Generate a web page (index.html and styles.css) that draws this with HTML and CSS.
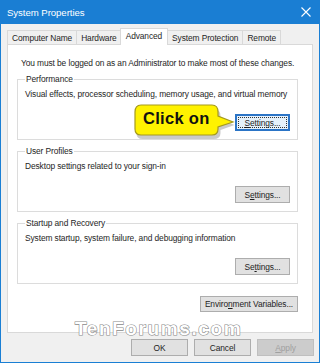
FILE: index.html
```html
<!DOCTYPE html>
<html>
<head>
<meta charset="utf-8">
<link rel="stylesheet" href="styles.css">
</head>
<body>
<div class="window">
  <div class="titlebar">
    <span class="title">System Properties</span>
    <svg class="close" width="10" height="10" viewBox="0 0 10 10"><path d="M0.5 0.5L9.5 9.5M9.5 0.5L0.5 9.5" stroke="#fff" stroke-width="1.1"/></svg>
  </div>
  <div class="tabs">
    <div class="tab">Computer Name</div>
    <div class="tab">Hardware</div>
    <div class="tab active">Advanced</div>
    <div class="tab">System Protection</div>
    <div class="tab">Remote</div>
  </div>
  <div class="panel">
    <p class="intro">You must be logged on as an Administrator to make most of these changes.</p>
    <fieldset class="group">
      <legend>Performance</legend>
      <p class="desc">Visual effects, processor scheduling, memory usage, and virtual memory</p>
      <div class="row"><button class="btn focused"><span class="focusring"><u>S</u>ettings...</span></button></div>
    </fieldset>
    <fieldset class="group">
      <legend>User Profiles</legend>
      <p class="desc">Desktop settings related to your sign-in</p>
      <div class="row"><button class="btn">S<u>e</u>ttings...</button></div>
    </fieldset>
    <fieldset class="group">
      <legend>Startup and Recovery</legend>
      <p class="desc">System startup, system failure, and debugging information</p>
      <div class="row"><button class="btn">Se<u>t</u>tings...</button></div>
    </fieldset>
    <div class="envrow"><button class="btn env">Enviro<u>n</u>ment Variables...</button></div>
  </div>
  <div class="footer">
    <button class="btn foot">OK</button>
    <button class="btn foot">Cancel</button>
    <button class="btn foot disabled"><u>A</u>pply</button>
  </div>
  <div class="callout">
    <svg class="bubble" width="102" height="36" viewBox="0 0 102 36">
      <path d="M7 3 H78 Q85 3 85 10 V13 L99 19 L85 24 V27 Q85 33 78 33 H7 Q1 33 1 27 V10 Q1 3 7 3 Z" fill="#8a8a8a" opacity="0.45" transform="translate(1.5,2)"/>
      <path d="M7 1 H78 Q84 1 84 8 V12 L99 18 L84 23 V25 Q84 31 78 31 H7 Q1 31 1 25 V8 Q1 1 7 1 Z" fill="#fff200" stroke="#a59a1e" stroke-width="1.2"/>
    </svg>
    <span class="callout-text">Click on</span>
  </div>
  <div class="watermark">TenForums.com</div>
</div>
</body>
</html>
```
FILE: styles.css
```css
* { box-sizing: border-box; }
html, body { margin: 0; padding: 0; }
body { width: 320px; height: 363px; overflow: hidden; background: #fff; font-family: "Liberation Sans", Arial, sans-serif; }
.window {
  position: relative;
  width: 320px; height: 363px;
  background: #f0f0f0;
  border: 1px solid #1a7fd4;
  border-top: none;
  display: flex; flex-direction: column;
}
.titlebar {
  height: 24px;
  margin: 0 -1px;
  background: #1a7ed3;
  display: flex; align-items: center; justify-content: space-between;
  padding: 0 9px 0 7px;
}
.title { color: #fff; font-family: "Liberation Sans", Arial, sans-serif; font-size: 9.6px; letter-spacing: -0.05px; }
.close { display: block; }
.tabs {
  display: flex;
  padding: 4px 0 0 6px;
  height: 20px;
  align-items: flex-end;
}
.tab {
  height: 14px;
  padding: 0 4px;
  border: 1px solid #d9d9d9;
  border-bottom: none;
  margin-right: -1px;
  background: #f0f0f0;
  font-size: 8.4px;
  letter-spacing: -0.1px;
  color: #1e1e1e;
  display: flex; align-items: center;
  position: relative;
  white-space: nowrap;
}
.tab.active {
  height: 17px;
  background: #fff;
  z-index: 2;
  margin-bottom: -1px;
  padding-bottom: 2px;
  margin-left: -1px;
  margin-right: -1px;
  padding-left: 5px;
  padding-right: 5px;
}
.panel {
  margin: 0 6px;
  height: 289px;
  background: #fff;
  border: 1px solid #d9d9d9;
  padding: 13px 14px 0 9px;
  display: flex; flex-direction: column;
}
.intro {
  margin: 0 0 5px 4px;
  font-size: 8.4px; color: #1e1e1e;
  letter-spacing: -0.1px;
  line-height: 11px;
  white-space: nowrap;
}
.group {
  margin: 0 0 6.5px 0;
  border: 1px solid #dcdcdc;
  height: 65.5px;
  padding: 0 7px 0 7px;
  min-width: 0;
}
.group legend {
  font-size: 8.4px; color: #1e1e1e;
  letter-spacing: -0.1px;
  padding: 0 1px;
  margin-left: 0;
  line-height: 11px;
}
.desc {
  margin: 4px 0 0 0;
  font-size: 8.4px; color: #1e1e1e;
  letter-spacing: -0.1px;
  line-height: 11px;
  white-space: nowrap;
}
.row { display: flex; justify-content: flex-end; margin-top: 14px; }
.btn {
  font-family: "Liberation Sans", Arial, sans-serif;
  font-size: 8.4px; color: #1e1e1e;
  letter-spacing: -0.1px;
  background: #e1e1e1;
  border: 1px solid #adadad;
  height: 17px;
  width: 55px;
  padding: 0;
  display: flex; align-items: center; justify-content: center;
  white-space: nowrap;
}
.btn.focused {
  border: 1px solid #2b74c6;
  box-shadow: inset 0 0 0 1px #2b74c6;
  background: #e5f1fb;
  padding: 2px;
}
.focusring {
  border: 1px dotted #333;
  width: 100%; height: 100%;
  display: flex; align-items: center; justify-content: center;
}
.envrow { display: flex; justify-content: flex-end; margin-top: 6px; }
.btn.env { width: 98px; height: 16px; }
.footer {
  display: flex; justify-content: flex-end;
  gap: 6px;
  padding: 6px 5px 0 0;
}
.btn.foot { width: 57px; height: 17px; }
.btn.disabled { background: #cccccc; border-color: #bfbfbf; color: #a0a0a0; }
.callout {
  position: absolute;
  left: 133px; top: 104px;
  width: 102px; height: 36px;
}
.bubble { position: absolute; left: 0; top: 0; }
.callout-text {
  position: absolute; left: 9px; top: 5px;
  font-family: "Liberation Sans", Arial, sans-serif;
  font-weight: bold; font-size: 16.5px; color: #111;
  letter-spacing: 0.3px;
}
.watermark {
  position: absolute;
  left: 74px; top: 318px;
  font-family: "Liberation Sans", Arial, sans-serif;
  font-weight: bold; font-size: 19px;
  color: #fff;
  letter-spacing: 1.6px;
  -webkit-text-stroke: 1.2px #8a8a8a;
  paint-order: stroke fill;
}
```
